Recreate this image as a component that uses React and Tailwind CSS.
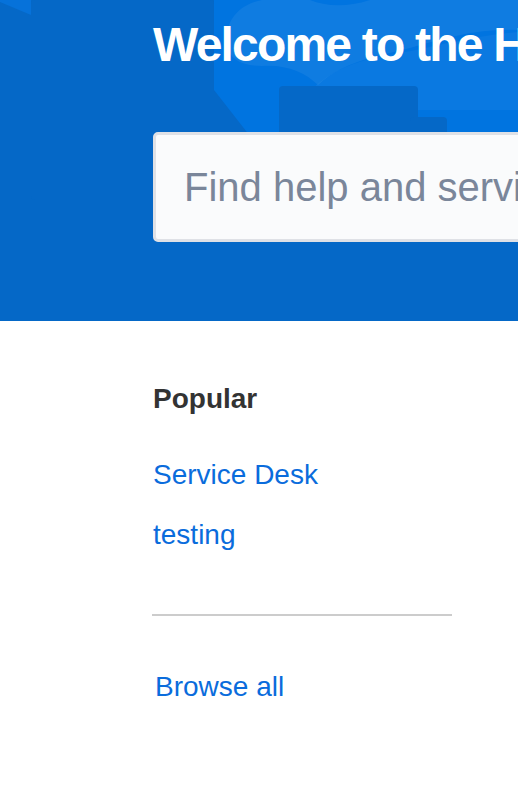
export default function App() {
  return (
    <div className="w-[518px] h-[792px] overflow-hidden bg-white" style={{ fontFamily: '"Liberation Sans", Arial, sans-serif' }}>
      <div className="relative h-[321px] overflow-hidden bg-[#0568c7]">
        <svg className="absolute inset-0" width="518" height="321" viewBox="0 0 518 321">
          <rect x="0" y="0" width="518" height="321" fill="#0568c7" />
          <polygon points="0,0 31,0 31,15 0,2" fill="#0672da" />
          <polygon points="214,0 518,0 518,200 300,200 214,90" fill="#0074e0" />
          <path d="M227,45 C224,20 240,4 262,0 L310,0 C325,6 345,8 370,0 L518,0 L518,30 C480,28 445,38 410,48 C380,56 345,60 318,85 C305,72 285,64 262,66 C240,66 229,58 227,45 Z" fill="#ffffff" fillOpacity="0.06" />
          <path d="M300,110 C310,80 345,62 390,55 C430,48 470,36 518,32 L518,110 Z" fill="#ffffff" fillOpacity="0.04" />
          <rect x="279" y="86" width="139" height="80" rx="4" fill="#0568c7" />
          <rect x="410" y="117" width="37" height="60" rx="4" fill="#0568c7" />
          <rect x="31" y="0" width="183" height="200" rx="4" fill="#0568c7" />
        </svg>
        <div className="relative pl-[153px] pt-[21px]">
          <h1 className="whitespace-nowrap text-[48px] leading-[48px] font-bold tracking-[-1.8px] text-white">
            Welcome to the Help Center
          </h1>
          <div className="mt-[63px] w-[560px] h-[110px] rounded-[5px] border-[3px] border-[#dfe1e6] bg-[#fafbfc] flex items-center pl-[28px]">
            <span className="whitespace-nowrap text-[40px] leading-[40px] text-[#7a869a]">Find help and services</span>
          </div>
        </div>
      </div>
      <div className="pl-[153px] pt-[64px]">
        <div className="text-[28px] leading-[28px] font-bold text-[#333333]">Popular</div>
        <div className="mt-[48px] text-[28px] leading-[28px] text-[#0a6cdc]">Service Desk</div>
        <div className="mt-[32px] text-[28px] leading-[28px] text-[#0a6cdc]">testing</div>
        <div className="mt-[65px] ml-[-1px] w-[300px] h-[2px] bg-[#cccccc]" />
        <div className="mt-[57px] ml-[2px] text-[28px] leading-[28px] text-[#0a6cdc]">Browse all</div>
      </div>
    </div>
  );
}
